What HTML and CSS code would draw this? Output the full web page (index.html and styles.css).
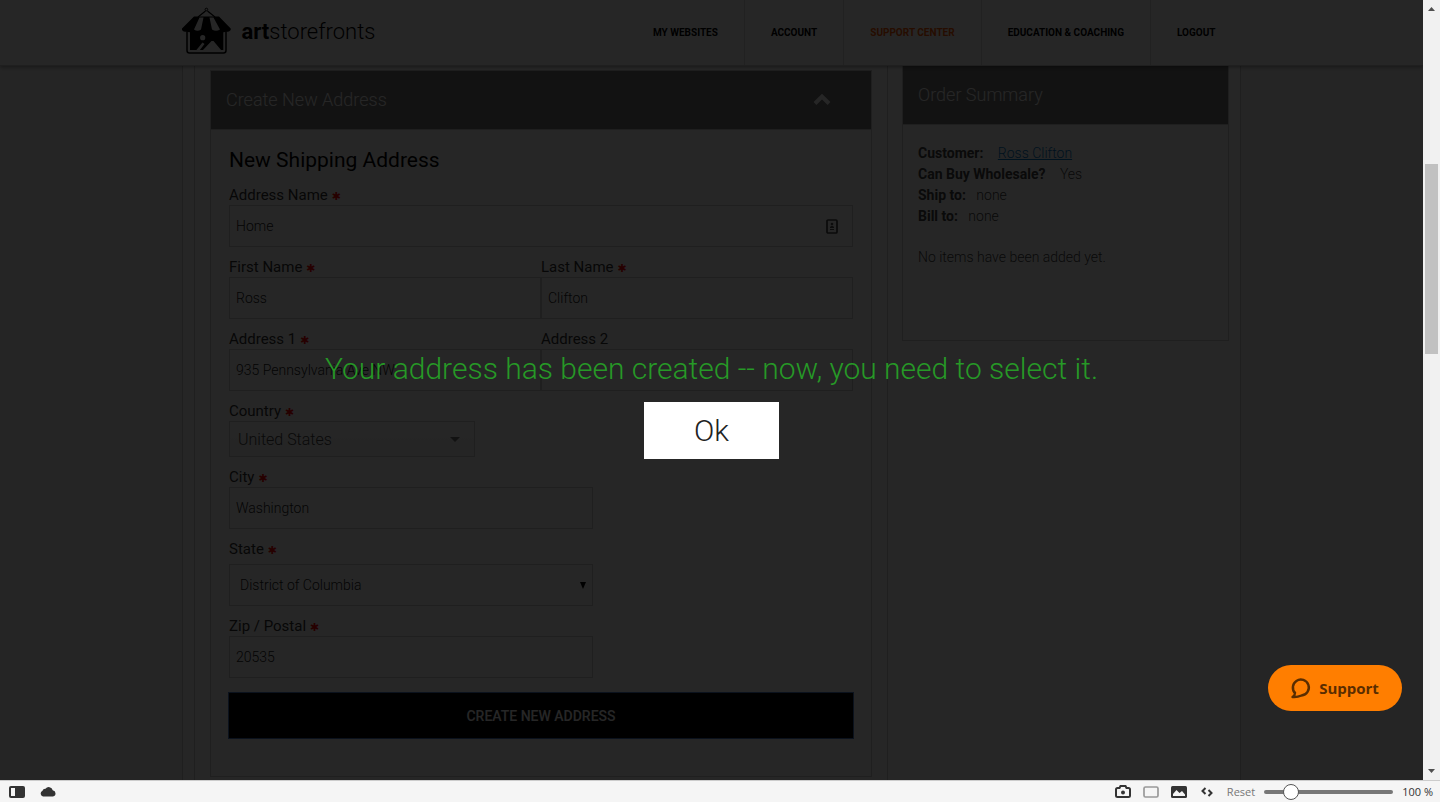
FILE: index.html
```html
<!DOCTYPE html>
<html lang="en">
<head>
    <meta charset="UTF-8">
    <meta name="viewport" content="width=device-width, initial-scale=1.0">
    <title>Art Storefronts - Create New Address</title>
    <link rel="stylesheet" href="styles.css">
</head>
<body>

    <div class="viewport">
        <div class="page">
            <header class="topbar">
                <div class="topbar-inner">
                    <a href="#" class="logo">
                        <svg width="50" height="48" viewBox="0 0 50 48">
                            <circle cx="24.400" cy="2.500" r="1.300" fill="none" stroke="#000" stroke-width="1"/>
                            <path d="M16 10L23.500 4M33 10L25.500 4" stroke="#000" stroke-width="1.200"/>
                            <path d="M12 9.500H37L48.700 21.500V23Q47 25.500 44.500 24.500Q41 26 38 24Q34 26 30 24Q24.500 26.500 19 24Q15 26 11 24Q8 26 4.500 24.500Q1.500 25.500 0 23V21.500Z"/>
                            <path d="M17.500 10.500H21.500L19 22.500Q15.500 25 12 22.500ZM27.500 10.500H31.500L38 22.500Q34 25 30 22.500Z" fill="#fff"/>
                            <path d="M5 24V43.500Q5 46 7.500 46H41.500Q44 46 44 43.500V24" fill="none" stroke="#000" stroke-width="1.500"/>
                            <path d="M8 24H41.300V43H8Z"/>
                            <path d="M14 43.500L20.500 35.500L22.500 37L17.500 43.500ZM20.500 43.500L29.500 34H31.500L39.500 43.500Z" fill="#fff"/>
                            <circle cx="20.700" cy="30.700" r="2.600" fill="#fff"/>
                        </svg>
                        <span class="logo-text"><b>art</b>storefronts</span>
                    </a>
                    <nav class="nav">
                        <a href="#">My Websites</a>
                        <a href="#">Account</a>
                        <a href="#" class="active">Support Center</a>
                        <a href="#">Education &amp; Coaching</a>
                        <a href="#">Logout</a>
                    </nav>
                </div>
            </header>

            <main class="container">
                <div class="main-column">
                    <section class="panel">
                        <div class="panel-header">
                            <h2>Create New Address</h2>
                            <button type="button" class="collapse-btn" aria-label="Collapse">
                                <svg width="18" height="12" viewBox="0 0 18 12"><path d="M2 10.500L9 3.500L16 10.500" fill="none" stroke="#fff" stroke-width="4"/></svg>
                            </button>
                        </div>
                        <form class="address-form">
                            <h3>New Shipping Address</h3>

                            <div class="field">
                                <label for="address-name">Address Name <span class="required">✱</span></label>
                                <div class="input-wrap">
                                    <input type="text" id="address-name" value="Home">
                                    <svg class="autofill-icon" width="12" height="15" viewBox="0 0 12 15">
                                        <rect x="1" y="1" width="10" height="13" rx="1" fill="none" stroke="#444" stroke-width="1.700"/>
                                        <circle cx="6" cy="5" r="1.300" fill="#555"/>
                                        <path d="M4 8.500Q6 5.500 8 8.500ZM4 10.500H8" fill="#555" stroke="#555"/>
                                    </svg>
                                </div>
                            </div>

                            <div class="field-row">
                                <div class="field">
                                    <label for="first-name">First Name <span class="required">✱</span></label>
                                    <input type="text" id="first-name" value="Ross">
                                </div>
                                <div class="field">
                                    <label for="last-name">Last Name <span class="required">✱</span></label>
                                    <input type="text" id="last-name" value="Clifton">
                                </div>
                            </div>

                            <div class="field-row">
                                <div class="field">
                                    <label for="address-1">Address 1 <span class="required">✱</span></label>
                                    <input type="text" id="address-1" value="935 Pennsylvania Ave NW">
                                </div>
                                <div class="field">
                                    <label for="address-2">Address 2</label>
                                    <input type="text" id="address-2">
                                </div>
                            </div>

                            <div class="field">
                                <label for="country">Country <span class="required">✱</span></label>
                                <div class="select-wrap country">
                                    <select id="country"><option>United States</option></select>
                                    <svg width="10" height="5" viewBox="0 0 10 5"><path d="M0 0H10L5 5Z" fill="#777"/></svg>
                                </div>
                            </div>

                            <div class="field half">
                                <label for="city">City <span class="required">✱</span></label>
                                <input type="text" id="city" value="Washington">
                            </div>

                            <div class="field half state">
                                <label for="state">State <span class="required">✱</span></label>
                                <div class="select-wrap">
                                    <select id="state"><option>District of Columbia</option></select>
                                    <svg width="6" height="7" viewBox="0 0 6 7"><path d="M0 0H6L3 7Z" fill="#000"/></svg>
                                </div>
                            </div>

                            <div class="field half">
                                <label for="zip">Zip / Postal <span class="required">✱</span></label>
                                <input type="text" id="zip" value="20535">
                            </div>

                            <button type="submit" class="create-btn">Create New Address</button>
                        </form>
                    </section>
                </div>

                <aside class="sidebar">
                    <section class="panel">
                        <div class="panel-header">
                            <h2>Order Summary</h2>
                        </div>
                        <div class="summary">
                            <p class="wide"><strong>Customer:</strong> <a href="#">Ross Clifton</a></p>
                            <p class="wide"><strong>Can Buy Wholesale?</strong> Yes</p>
                            <p><strong>Ship to:</strong> none</p>
                            <p><strong>Bill to:</strong> none</p>
                            <p class="empty">No items have been added yet.</p>
                        </div>
                    </section>
                </aside>
            </main>

            <!-- Confirmation message over the page -->
            <div class="overlay">
                <p class="message">Your address has been created -- now, you need to select it.</p>
                <button type="button" class="ok-btn">Ok</button>
            </div>

            <button type="button" class="support-btn">
                <svg width="20" height="22" viewBox="0 0 20 22"><path d="M4.500 16.500A8 8 0 1 1 10.500 18.500Q6 20.500 1.500 20Q4 18.500 4 16Q1.500 13 2 9.500" fill="none" stroke="#5a2d00" stroke-width="2.400" stroke-linejoin="round"/></svg>
                Support
            </button>
        </div>

        <div class="scrollbar">
            <svg width="7" height="4" viewBox="0 0 7 4"><path d="M0 4H7L3.500 0Z" fill="#505050"/></svg>
            <div class="track"><div class="thumb"></div></div>
            <svg width="7" height="4" viewBox="0 0 7 4"><path d="M0 0H7L3.500 4Z" fill="#505050"/></svg>
        </div>
    </div>

    <footer class="statusbar">
        <button type="button" aria-label="Panel">
            <svg width="16" height="12" viewBox="0 0 16 12"><rect width="16" height="12" rx="2" fill="#333"/><rect x="2" y="2" width="4" height="8" fill="#f5f5f5"/></svg>
        </button>
        <button type="button" aria-label="Sync" class="sync-btn">
            <svg width="16" height="11" viewBox="0 0 16 11"><path d="M3 10.500A3 3 0 0 1 2.500 4.800A2.800 2.800 0 0 1 5.500 2.800A4 4 0 0 1 12.700 4.200A3.200 3.200 0 0 1 13 10.500Z" fill="#333"/></svg>
        </button>
        <button type="button" aria-label="Capture">
            <svg width="16" height="13" viewBox="0 0 16 13"><path d="M1 4.500Q1 3 2.500 3H4.500L5.500 1H10.500L11.500 3H13.500Q15 3 15 4.500V10.500Q15 12 13.500 12H2.500Q1 12 1 10.500Z" fill="none" stroke="#333" stroke-width="2"/><circle cx="8" cy="7.500" r="2" fill="#333"/></svg>
        </button>
        <button type="button" aria-label="Tiling">
            <svg width="16" height="12" viewBox="0 0 16 12"><rect x="1" y="1" width="14" height="10" rx="1.500" fill="none" stroke="#999" stroke-width="1.700"/></svg>
        </button>
        <button type="button" aria-label="Images">
            <svg width="16" height="12" viewBox="0 0 16 12"><rect width="16" height="12" rx="1.500" fill="#333"/><path d="M2 10V8L5.500 4L8.500 7L11 5L14 8.500V10Z" fill="#f5f5f5"/></svg>
        </button>
        <button type="button" aria-label="Page actions" class="actions-btn">
            <svg width="12" height="10" viewBox="0 0 12 10"><path d="M4.500 1L1.500 4L4.500 7M7.500 3L10.500 6L7.500 9" fill="none" stroke="#333" stroke-width="2"/></svg>
        </button>
        <div class="zoom-group">
            <button type="button" class="reset-btn">Reset</button>
            <input type="range" class="zoom" min="20" max="500" value="100" aria-label="Zoom">
            <span class="zoom-value">100 %</span>
        </div>
    </footer>

</body>
</html>
```
FILE: styles.css
```css
* {
    box-sizing: border-box;
}

body {
    display: flex;
    flex-direction: column;
    height: 100vh;
    margin: 0;
    font-family: Roboto, sans-serif;
    font-size: 14px;
    font-weight: 300;
    color: #333;
    overflow: hidden;
}

h2, h3, p {
    margin: 0;
}

button {
    font-family: inherit;
    border: none;
    cursor: pointer;
}

svg {
    display: block;
}

.viewport {
    display: flex;
    flex: 1;
    min-height: 0;
}

.page {
    position: relative;
    display: flex;
    flex-direction: column;
    flex: 1;
    overflow: hidden;
    background-color: #f6f6f6;
}

/* Top bar */
.topbar {
    position: absolute;
    top: 0;
    left: 0;
    right: 0;
    height: 66px;
    background-color: #fff;
    border-bottom: 1px solid #ccc;
    box-shadow: 0 1px 4px rgba(0, 0, 0, 0.4);
}

.topbar-inner {
    display: flex;
    justify-content: space-between;
    max-width: 1060px;
    height: 100%;
    margin: 0 auto;
}

.logo {
    display: flex;
    align-items: center;
    gap: 10px;
    padding-bottom: 3px;
    color: #000;
    text-decoration: none;
}

.logo-text {
    font-size: 22px;
}

.logo-text b {
    font-weight: 700;
}

.nav {
    display: flex;
}

.nav a {
    display: flex;
    align-items: center;
    padding: 0 26px;
    border-right: 1px solid #dcdcdc;
    font-size: 10px;
    font-weight: 700;
    color: #000;
    text-decoration: none;
    text-transform: uppercase;
}

.nav a:last-child {
    border-right: none;
}

.nav a.active {
    color: #ff5a00;
}

/* Page content */
.container {
    display: flex;
    flex: 1;
    gap: 14px;
    width: 100%;
    max-width: 1059px;
    margin: 0 auto;
    padding: 0 11px;
    background-color: #fff;
    border: 1px solid #ccc;
    border-width: 0 1px;
}

.main-column {
    flex: 1;
    padding: 70px 15px 0;
    border: 1px solid #ccc;
    border-width: 0 1px;
}

.sidebar {
    width: 327px;
    padding-top: 65px;
}

.panel {
    border: 1px solid #ccc;
}

.panel-header {
    display: flex;
    align-items: center;
    justify-content: space-between;
    height: 59px;
    padding: 0 40px 2px 15px;
    background-color: #787878;
    border-bottom: 1px solid #ccc;
}

.panel-header h2 {
    font-size: 18px;
    font-weight: 300;
    color: #fff;
}

.collapse-btn {
    padding: 0;
    background: none;
}

.address-form {
    padding: 16px 18px 38px;
}

.address-form h3 {
    font-size: 21px;
    font-weight: 400;
    line-height: 29px;
    color: #000;
}

.field {
    flex: 1;
    padding-top: 10px;
}

.field-row {
    display: flex;
}

.field.half {
    max-width: 364px;
}

label {
    display: block;
    font-size: 15px;
    font-weight: 400;
    line-height: 20px;
    color: #333;
}

.required {
    font-family: "DejaVu Sans", sans-serif;
    font-size: 11px;
    font-weight: 700;
    line-height: 1;
    color: #f00;
}

.field input, .field select {
    display: block;
    width: 100%;
    height: 42px;
    padding: 0 6px;
    border: 1px solid #ccc;
    border-radius: 0;
    background-color: #fff;
    font-family: inherit;
    font-size: 14px;
    font-weight: 300;
    color: #222;
    appearance: none;
}

.field select {
    padding: 0 10px;
}

.input-wrap, .select-wrap {
    display: grid;
    align-items: center;
}

.input-wrap > *, .select-wrap > * {
    grid-area: 1 / 1;
}

.autofill-icon {
    justify-self: end;
    margin-right: 15px;
}

.select-wrap svg {
    justify-self: end;
    margin-right: 7px;
    pointer-events: none;
}

.field .country {
    max-width: 246px;
}

.field .country select {
    height: 36px;
    padding: 0 8px;
    background-image: linear-gradient(#fff, #f4f4f4);
    font-size: 16px;
    color: #444;
}

.field .country svg {
    margin-right: 15px;
}

.state .select-wrap {
    margin-top: 5px;
}

.create-btn {
    width: 100%;
    height: 45px;
    margin-top: 15px;
    background-color: #000;
    outline: 1px solid #4d78c0;
    font-size: 14px;
    font-weight: 500;
    color: #fff;
    text-transform: uppercase;
}

/* Order summary */
.summary {
    min-height: 215px;
    padding: 18px 15px;
    line-height: 21px;
    color: #444;
}

.summary strong {
    margin-right: 7px;
    font-weight: 700;
}

.summary .wide strong {
    margin-right: 11px;
}

.summary a {
    color: #0078c8;
}

.summary .empty {
    margin-top: 20px;
}

/* Message overlay */
.overlay {
    position: absolute;
    inset: 0;
    display: flex;
    flex-direction: column;
    align-items: center;
    justify-content: center;
    gap: 15px;
    padding-top: 30px;
    background-color: rgba(0, 0, 0, 0.85);
}

.message {
    font-size: 30px;
    line-height: 36px;
    color: #269926;
}

.ok-btn {
    width: 135px;
    height: 57px;
    background-color: #fff;
    font-size: 30px;
    font-weight: 300;
    color: #222;
}

.support-btn {
    position: absolute;
    right: 21px;
    bottom: 69px;
    display: flex;
    align-items: center;
    justify-content: center;
    gap: 8px;
    min-width: 134px;
    height: 46px;
    padding: 0 22px;
    border-radius: 23px;
    background-color: #ff7e00;
    font-family: "Open Sans", sans-serif;
    font-size: 15px;
    font-weight: 700;
    color: #5a2d00;
}

/* Browser scrollbar */
.scrollbar {
    display: flex;
    flex-direction: column;
    align-items: center;
    width: 17px;
    padding: 7px 0;
    background-color: #f1f1f1;
}

.track {
    flex: 1;
    width: 13px;
    padding-top: 153px;
}

.thumb {
    height: 190px;
    background-color: #c1c1c1;
}

/* Browser status bar */
.statusbar {
    display: flex;
    align-items: center;
    gap: 12px;
    height: 22px;
    padding: 0 7px 0 9px;
    background-color: #f5f5f5;
    border-top: 1px solid #ccc;
    font-family: "Open Sans", sans-serif;
    font-size: 11px;
    font-weight: 400;
}

.statusbar button {
    padding: 0;
    background: none;
}

.statusbar .sync-btn {
    margin: 0 auto 0 3px;
}

.statusbar .actions-btn {
    padding: 0 2px;
}

.zoom-group {
    display: flex;
    align-items: center;
    gap: 9px;
}

.reset-btn {
    font-size: 11px;
    color: #777;
}

.zoom {
    width: 129px;
    height: 16px;
    margin: 0;
    background: none;
    appearance: none;
}

.zoom::-webkit-slider-runnable-track {
    height: 4px;
    border-radius: 2px;
    background-color: #777;
}

.zoom::-webkit-slider-thumb {
    width: 16px;
    height: 16px;
    margin-top: -6px;
    border: 1px solid #555;
    border-radius: 50%;
    background-color: #fff;
    appearance: none;
}
```
